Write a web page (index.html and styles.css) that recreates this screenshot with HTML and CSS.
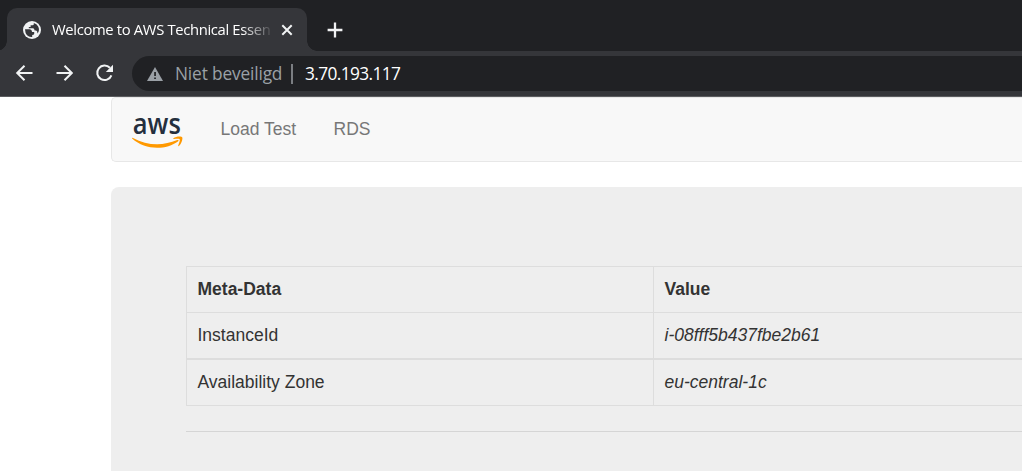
FILE: index.html
```html
<!DOCTYPE html>
<html lang="nl">
<head>
<meta charset="utf-8">
<title>Welcome to AWS Technical Essentials</title>
<link rel="stylesheet" href="styles.css">
</head>
<body>
<header class="browser">
  <div class="tabstrip">
    <div class="tab">
      <svg class="globe" width="18" height="18" viewBox="0 0 18 18"><circle cx="9" cy="9" r="9" fill="#f1f3f4"/><path d="M2 8.2 H6.2 Q9 8.4 9 11 H11.2 V13 Q10.8 14 9.2 14 V15.9 Q4.6 16.2 2.6 12 Z M10.8 2 V3.2 Q10.8 4.3 9.4 4.3 H7.6 V6 H5.8 V7.2 H10.2 Q11.4 7.4 11.6 9.6 H13 Q14.3 9.8 14.6 12.4 Q17 9 15.2 5.4 Q13.8 2.9 10.8 2 Z" fill="#35363a"/></svg>
      <span class="tab-title">Welcome to AWS Technical Essen</span>
      <svg class="close" width="12" height="12" viewBox="0 0 12 12"><path d="M1.3 1.3 10.7 10.7M10.7 1.3 1.3 10.7" stroke="#f1f3f4" stroke-width="2" fill="none"/></svg>
    </div>
    <svg class="plus" width="16" height="16" viewBox="0 0 16 16"><path d="M8 .6V15.4M.6 8H15.4" stroke="#f1f3f4" stroke-width="2.3"/></svg>
  </div>
  <div class="toolbar">
    <svg class="nav-icon" width="18" height="18" viewBox="0 0 18 18"><path d="M17.5 9H2.5M9.5 1.7 2.2 9 9.5 16.3" fill="none" stroke="#f1f3f4" stroke-width="2"/></svg>
    <svg class="nav-icon" width="18" height="18" viewBox="0 0 18 18"><path d="M1.5 9H16.5M9.5 1.7 16.8 9 9.5 16.3" fill="none" stroke="#f1f3f4" stroke-width="2"/></svg>
    <svg class="nav-icon" width="18" height="18" viewBox="0 0 18 18"><path d="M16.4 11.3A7.3 7.3 0 1 1 14.9 3.8" fill="none" stroke="#f1f3f4" stroke-width="2"/><path d="M18 .8V8H10.8Z" fill="#f1f3f4"/></svg>
    <div class="address">
      <svg width="16" height="14" viewBox="0 0 16 14"><path d="M8 0 16 14H0Z" fill="#9aa0a6"/><path d="M7.2 5h1.7v4H7.2zM7.2 10.4h1.7V12H7.2z" fill="#202124"/></svg>
      <span class="security">Niet beveiligd</span>
      <span class="divider"></span>
      <span class="url">3.70.193.117</span>
    </div>
  </div>
</header>
<main class="page">
  <nav class="navbar">
    <svg class="logo" width="52" height="60" viewBox="0 -6 52 60"><text class="logo-text" x=".8" y="30.5" textLength="48" lengthAdjust="spacingAndGlyphs">aws</text><path d="M.1 35.6Q-.3 34.5 1 34.9C15 42.8 31 43.1 45.2 37.1Q47.4 36.4 46.2 38.2C34 47.5 13 47.4.1 35.6Z" fill="#f90"/><path d="M41.3 35.4C44 33.2 49.8 33.2 50.3 34.4C50.9 36 49.2 41.2 46.9 43Q46 43.5 46.2 42.4C47.1 40.1 48.3 37.1 47.7 36.3C47.1 35.6 44.4 35.8 41.9 36.1Q40.7 36.1 41.3 35.4Z" fill="#f90"/></svg>
    <a class="nav-link">Load Test</a>
    <a class="nav-link">RDS</a>
  </nav>
  <section class="jumbotron">
    <table class="metadata">
      <tr><th>Meta-Data</th><th>Value</th></tr>
      <tr><td>InstanceId</td><td><i>i-08fff5b437fbe2b61</i></td></tr>
      <tr class="thick"><td>Availability Zone</td><td><i>eu-central-1c</i></td></tr>
    </table>
    <hr class="rule">
  </section>
</main>
</body>
</html>
```
FILE: styles.css
```css
* { box-sizing: border-box; }
body { margin: 0; height: 471px; overflow: hidden; background: #fff; color: #333; font: 17.5px/25px "Liberation Sans", Arial, sans-serif; }
svg { display: block; flex: none; }
.browser { height: 97px; background: #35363a; border-bottom: 1px solid #5b5c5f; font-family: "Open Sans", "Noto Sans", sans-serif; }
.tabstrip { height: 51px; padding: 8px 0 0 7px; display: flex; background: #202124; }
.tab { position: relative; width: 300px; height: 43px; padding: 0 0 0 16px; display: flex; align-items: center; background: #35363a; border-radius: 10px 10px 0 0; }
.tab::before, .tab::after { content: ""; position: absolute; bottom: 0; width: 10px; height: 10px; }
.tab::before { left: -10px; background: radial-gradient(circle at 0 0, transparent 9.5px, #35363a 10px); }
.tab::after { right: -10px; background: radial-gradient(circle at 100% 0, transparent 9.5px, #35363a 10px); }
.tab-title { width: 219px; margin-left: 11px; overflow: hidden; white-space: nowrap; color: #fff; font-size: 14.8px; letter-spacing: -.34px; -webkit-mask-image: linear-gradient(to right, #000 190px, transparent 222px); mask-image: linear-gradient(to right, #000 190px, transparent 222px); }
.close { margin-left: 10px; }
.plus { margin: 14px 0 0 19.5px; }
.toolbar { height: 45px; padding: 5px 0 5px 15px; display: flex; align-items: center; }
.nav-icon { margin: -1px 22px 0 0; }
.address { flex: 1; height: 35px; margin-left: -3px; padding-left: 15px; display: flex; align-items: center; background: #202124; border-radius: 18px 0 0 18px; font-size: 17.3px; white-space: nowrap; }
.security { width: 108px; margin-left: 12px; color: #9aa0a6; letter-spacing: -.15px; }
.divider { width: 2px; height: 20px; margin-left: 8px; background: #7b7e82; }
.url { margin-left: 12px; color: #fff; letter-spacing: -.6px; }
.page { margin-left: 111px; }
.navbar { height: 65px; padding-left: 20px; display: flex; align-items: center; background: #f8f8f8; border: 1px solid #e7e7e7; border-right: 0; border-radius: 5px 0 0 5px; }
.logo { margin-top: -5px; overflow: visible; }
.logo-text { font: 600 28.5px "Open Sans", "Noto Sans", sans-serif; fill: #252f3e; }
.nav-link { margin-left: 36.5px; color: #777; }
.nav-link + .nav-link { margin-left: 37.5px; }
.jumbotron { height: 284px; margin-top: 25px; padding: 79px 0 0 75px; background: #eee; border-radius: 8px 0 0 0; }
.metadata { width: 100%; border-collapse: separate; border-spacing: 0; border-top: 1px solid #ddd; border-left: 1px solid #ddd; table-layout: fixed; }
.metadata th, .metadata td { height: 46px; padding: 0 11px 0 10.5px; text-align: left; vertical-align: middle; border-bottom: 1px solid #ddd; }
.metadata th:first-child, .metadata td:first-child { width: 467px; border-right: 1px solid #ddd; }
.metadata .thick td { height: 47px; border-top: 1px solid #ddd; }
.rule { height: 1px; margin: 25px 0 0; border: 0; background: #d5d5d5; }
```
